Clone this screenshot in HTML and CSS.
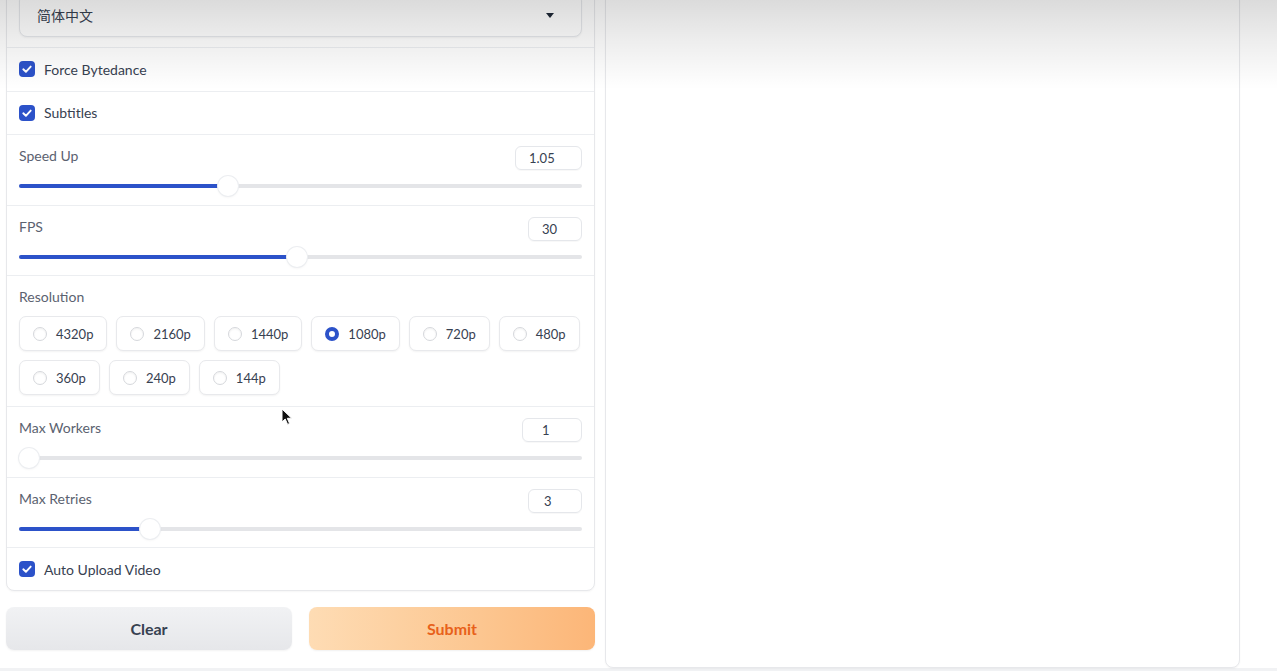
FILE: index.html
```html
<!DOCTYPE html>
<html lang="zh">
<head>
<meta charset="utf-8">
<title>Settings</title>
<link rel="stylesheet" href="styles.css">
</head>
<body>
<div class="page">
  <div class="left">
    <div class="card">
      <div class="row row-dd">
        <div class="dropdown">
          <span class="dd-text">简体中文</span>
          <span class="dd-arrow"></span>
        </div>
      </div>
      <div class="row row-check">
        <span class="cb"><svg viewBox="0 0 16 16" width="16" height="16"><path d="M4.3 8.3 L6.9 10.8 L11.7 5.6" fill="none" stroke="#fff" stroke-width="1.9" stroke-linecap="round" stroke-linejoin="round"/></svg></span>
        <span class="cb-label">Force Bytedance</span>
      </div>
      <div class="row row-check">
        <span class="cb"><svg viewBox="0 0 16 16" width="16" height="16"><path d="M4.3 8.3 L6.9 10.8 L11.7 5.6" fill="none" stroke="#fff" stroke-width="1.9" stroke-linecap="round" stroke-linejoin="round"/></svg></span>
        <span class="cb-label">Subtitles</span>
      </div>
      <div class="row row-slider">
        <div class="sl-head">
          <span class="sl-label">Speed Up</span>
          <span class="num num-w67">1.05</span>
        </div>
        <div class="slider" style="--p:0.367"><div class="track"><div class="fill"></div></div><span class="thumb"></span></div>
      </div>
      <div class="row row-slider">
        <div class="sl-head">
          <span class="sl-label">FPS</span>
          <span class="num num-w54">30</span>
        </div>
        <div class="slider" style="--p:0.493"><div class="track"><div class="fill"></div></div><span class="thumb"></span></div>
      </div>
      <div class="row row-radio">
        <span class="sl-label">Resolution</span>
        <div class="radios">
          <label class="radio"><span class="dot"></span>4320p</label>
          <label class="radio"><span class="dot"></span>2160p</label>
          <label class="radio"><span class="dot"></span>1440p</label>
          <label class="radio"><span class="dot dot-on"></span>1080p</label>
          <label class="radio"><span class="dot"></span>720p</label>
          <label class="radio"><span class="dot"></span>480p</label>
          <label class="radio"><span class="dot"></span>360p</label>
          <label class="radio"><span class="dot"></span>240p</label>
          <label class="radio"><span class="dot"></span>144p</label>
        </div>
      </div>
      <div class="row row-slider">
        <div class="sl-head">
          <span class="sl-label">Max Workers</span>
          <span class="num num-w60 num-pad">1</span>
        </div>
        <div class="slider" style="--p:0"><div class="track"><div class="fill"></div></div><span class="thumb"></span></div>
      </div>
      <div class="row row-slider">
        <div class="sl-head">
          <span class="sl-label">Max Retries</span>
          <span class="num num-w54 num-pad2">3</span>
        </div>
        <div class="slider" style="--p:0.223"><div class="track"><div class="fill"></div></div><span class="thumb"></span></div>
      </div>
      <div class="row row-check row-last">
        <span class="cb"><svg viewBox="0 0 16 16" width="16" height="16"><path d="M4.3 8.3 L6.9 10.8 L11.7 5.6" fill="none" stroke="#fff" stroke-width="1.9" stroke-linecap="round" stroke-linejoin="round"/></svg></span>
        <span class="cb-label">Auto Upload Video</span>
      </div>
    </div>
    <div class="buttons">
      <button class="btn btn-clear">Clear</button>
      <button class="btn btn-submit">Submit</button>
    </div>
  </div>
  <div class="right"></div>
</div>
<div class="shade"></div>
<svg class="cursor" viewBox="0 0 12 18" width="12" height="18"><path d="M1 1 L1 14 L4.2 11 L6.6 16.4 L8.6 15.5 L6.3 10.3 L10.6 10.2 Z" fill="#111" stroke="#fff" stroke-width="1"/></svg>
</body>
</html>
```

FILE: styles.css
```css
* { box-sizing: border-box; }
html, body { margin: 0; padding: 0; }
body {
  width: 1277px;
  height: 671px;
  overflow: hidden;
  background: #ffffff;
  font-family: "Lato", "Noto Sans", "Noto Sans CJK SC", sans-serif;
  color: #374151;
  position: relative;
}
.page {
  display: flex;
  gap: 10px;
  padding-left: 6px;
  margin-top: -20px;
  align-items: flex-start;
  border-bottom: 3px solid #f1f2f4;
}
.left {
  width: 589px;
  display: flex;
  flex-direction: column;
  gap: 16px;
}
.right {
  width: 635px;
  height: 688px;
  background: #fff;
  border: 1px solid #e7e8eb;
  border-radius: 8px;
  box-shadow: 0 1px 2px rgba(0,0,0,0.04);
}
.card {
  background: #fff;
  border: 1px solid #e7e8eb;
  border-radius: 8px;
  box-shadow: 0 1px 2px rgba(0,0,0,0.04);
}
.row {
  padding: 11px 12px 11px 12px;
  border-top: 1px solid #eceef1;
}
.row:first-child { border-top: none; }
.row-dd { padding: 12px 12px 10px 12px; }
.dropdown {
  height: 44px;
  border: 1px solid #e5e7eb;
  border-radius: 8px;
  background: #fff;
  box-shadow: 0 1px 2px rgba(0,0,0,0.05);
  display: flex;
  align-items: center;
  justify-content: space-between;
  padding: 0 27px 0 17px;
}
.dd-text {
  font-family: "Noto Sans CJK SC", sans-serif;
  font-size: 14px;
  color: #374151;
}
.dd-arrow {
  width: 0;
  height: 0;
  border-left: 4.5px solid transparent;
  border-right: 4.5px solid transparent;
  border-top: 5px solid #1f2937;
}
.row-check {
  display: flex;
  align-items: center;
  gap: 9px;
  height: 43.5px;
  padding-top: 0;
  padding-bottom: 0;
}
.row-last { height: 43px; }
.cb {
  width: 16px;
  height: 16px;
  border-radius: 4px;
  background: #2c52c9;
  display: flex;
}
.cb-label {
  font-size: 14px;
  color: #374151;
}
.row-slider { height: 70.5px; padding-top: 11px; }
.sl-head {
  display: flex;
  justify-content: space-between;
  align-items: flex-start;
  height: 24px;
}
.sl-label {
  display: block;
  font-size: 14px;
  line-height: 20px;
  color: #5b6270;
}
.num {
  height: 24px;
  border: 1px solid #e5e7eb;
  border-radius: 6px;
  font-size: 13px;
  line-height: 22px;
  padding-left: 13px;
  color: #374151;
  box-shadow: 0 1px 1px rgba(0,0,0,0.03);
}
.num-w67 { width: 67px; }
.num-w54 { width: 54px; }
.num-w60 { width: 60px; }
.num-pad { padding-left: 19px; }
.num-pad2 { padding-left: 15px; }
.slider {
  position: relative;
  height: 20px;
  margin-top: 6px;
  display: flex;
  align-items: center;
}
.track {
  flex: 1;
  height: 4px;
  background: #e4e5e8;
  border-radius: 2px;
  overflow: hidden;
}
.fill {
  height: 100%;
  width: calc(10px + (100% - 20px) * var(--p));
  background: #2c52c9;
}
.thumb {
  position: absolute;
  top: 0;
  left: calc((100% - 20px) * var(--p));
  width: 20px;
  height: 20px;
  border-radius: 50%;
  background: #fff;
  box-shadow: 0 0 0 1px #eceef1, 0 1px 3px rgba(0,0,0,0.08);
}
.row-radio { padding-top: 11px; padding-bottom: 11px; }
.radios {
  display: flex;
  flex-wrap: wrap;
  gap: 9px 9px;
  margin-top: 9px;
}
.radio {
  height: 35px;
  display: flex;
  align-items: center;
  gap: 9px;
  padding: 0 13px 0 13px;
  border: 1px solid #e8e9ec;
  border-radius: 7px;
  background: #fff;
  box-shadow: 0 1px 2px rgba(0,0,0,0.05);
  font-size: 13px;
  color: #374151;
}
.dot {
  width: 14px;
  height: 14px;
  border-radius: 50%;
  border: 1px solid #d6d8dc;
  background: #fff;
  box-shadow: inset 0 1px 2px rgba(0,0,0,0.06);
}
.dot-on {
  border: 4px solid #2c52c9;
  box-shadow: none;
}
.buttons {
  display: flex;
  gap: 17px;
}
.btn {
  flex: 1;
  height: 43px;
  border: none;
  border-radius: 8px;
  font-family: "Lato", "Noto Sans", sans-serif;
  font-size: 16px;
  font-weight: 700;
  cursor: pointer;
}
.btn-clear {
  background: linear-gradient(to bottom, #f1f2f4, #e6e7ea);
  color: #374151;
  box-shadow: 0 1px 2px rgba(0,0,0,0.05);
}
.btn-submit {
  background: linear-gradient(to right, #fedcb4, #fcc690 60%, #fcb678);
  color: #e8611a;
  box-shadow: 0 1px 2px rgba(0,0,0,0.06);
}
.shade {
  position: absolute;
  top: 0;
  left: 0;
  width: 1277px;
  height: 90px;
  pointer-events: none;
  background: linear-gradient(to bottom, rgba(0,0,0,0.14), rgba(0,0,0,0.07) 40px, rgba(0,0,0,0.01) 80px, rgba(0,0,0,0) 90px);
}
.cursor {
  position: absolute;
  left: 281px;
  top: 408px;
}
```
